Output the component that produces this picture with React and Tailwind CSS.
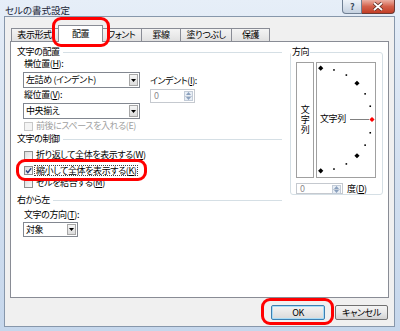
import React from "react";

function Combo({ className, text }) {
  return (
    <div className={`flex items-stretch border border-[#828790] bg-white ${className}`}>
      <div className="flex flex-1 items-center pl-[2px]">{text}</div>
      <div className="my-px mr-px flex w-[9px] items-center justify-center border border-[#a7a7a7] bg-gradient-to-b from-[#f6f6f6] to-[#dcdcdc]">
        <svg width="5" height="3" viewBox="0 0 5 3">
          <path d="M0 0H5L2.5 3Z" fill="#000" />
        </svg>
      </div>
    </div>
  );
}

function Spin({ className }) {
  return (
    <div className={`flex border border-[#c5c9cf] bg-white ${className}`}>
      <div className="flex flex-1 items-center pl-[3px] text-[#8d8d8d]">0</div>
      <div className="my-px mr-px flex w-[9px] flex-col">
        <div className="flex flex-1 items-center justify-center border border-[#c3ccd8] bg-[#e8eef5]">
          <svg width="5" height="3" viewBox="0 0 5 3">
            <path d="M0 3H5L2.5 0Z" fill="#8aa0bd" />
          </svg>
        </div>
        <div className="flex flex-1 items-center justify-center border border-t-0 border-[#c3ccd8] bg-[#e8eef5]">
          <svg width="5" height="3" viewBox="0 0 5 3">
            <path d="M0 0H5L2.5 3Z" fill="#8aa0bd" />
          </svg>
        </div>
      </div>
    </div>
  );
}

function Check({ checked, disabled }) {
  return (
    <div
      className={`flex h-[9px] w-[9px] shrink-0 items-center justify-center border ${
        disabled
          ? "border-[#c8c8c8] bg-[#f4f4f4]"
          : "border-[#8e8f8f] bg-gradient-to-br from-[#dcdcdc] to-[#fbfbfb]"
      }`}
    >
      {checked && (
        <svg width="7" height="7" viewBox="0 0 7 7">
          <path d="M1 3.5L2.8 5.6L6.2 1.2" fill="none" stroke="#2a3f80" strokeWidth="1.4" />
        </svg>
      )}
    </div>
  );
}

function Header({ className, children }) {
  return (
    <div className={`flex h-[10px] items-center pl-[6px] pr-[8px] ${className}`}>
      <span>{children}</span>
      <div className="ml-[3px] h-px flex-1 bg-[#d5dfe5]" />
    </div>
  );
}

function Dial() {
  const pts = [];
  for (let a = -90; a <= 90; a += 15) {
    const r = (a * Math.PI) / 180;
    pts.push({
      x: 3.7 + 51.3 * Math.cos(r),
      y: 56.5 - 51.3 * Math.sin(r),
      big: a % 45 === 0,
      red: a === 0,
    });
  }
  return (
    <svg className="absolute inset-0" width="58" height="114" viewBox="0 0 58 114">
      <line x1="33" y1="56.5" x2="52" y2="56.5" stroke="#808080" strokeWidth="1" />
      {pts.map((p, i) =>
        p.big ? (
          <polygon
            key={i}
            points={`${p.x},${p.y - 2.6} ${p.x + 2.6},${p.y} ${p.x},${p.y + 2.6} ${p.x - 2.6},${p.y}`}
            fill={p.red ? "#ff0000" : "#000"}
          />
        ) : (
          <rect key={i} x={p.x - 0.8} y={p.y - 0.8} width="1.6" height="1.6" fill="#000" />
        )
      )}
    </svg>
  );
}

export default function App() {
  return (
    <div className="relative h-[331px] w-[400px] overflow-hidden bg-gradient-to-b from-[#e6eef8] via-[#d3e0f0] to-[#c6d7ec] font-['Noto_Sans_CJK_JP','Noto_Sans',sans-serif] text-[9px] leading-[10px] tracking-[-0.4px] text-black [font-feature-settings:'palt']">
      {/* title bar */}
      <div className="flex h-[16px] items-start">
        <div className="pl-[5px] pt-[5px] text-[9.5px] tracking-normal text-[#1b2636]">セルの書式設定</div>
        <div className="ml-auto mr-[5px] flex">
          <div className="flex h-[14px] w-[20px] items-center justify-center rounded-bl-[4px] border border-t-0 border-[#6f7f93] bg-gradient-to-b from-[#eef3f9] to-[#c5d1e0] text-[9px] font-bold text-[#3b4a5e]">
            ?
          </div>
          <div className="flex h-[14px] w-[33px] items-center justify-center rounded-br-[4px] border border-l-0 border-t-0 border-[#6b3a33] bg-gradient-to-b from-[#eab0a4] via-[#d3604a] to-[#c23d25]">
            <svg width="12" height="9" viewBox="0 0 12 9">
              <path d="M2 1L10 8M10 1L2 8" stroke="#5a2a22" strokeWidth="3.4" />
              <path d="M2 1L10 8M10 1L2 8" stroke="#fff" strokeWidth="1.8" />
            </svg>
          </div>
        </div>
      </div>

      {/* client area */}
      <div className="ml-[4px] h-[311px] w-[391px] border border-[#8797ab] bg-[#f0f0f0] pt-[8px]">
        {/* tabs */}
        <div className="ml-[6px] flex h-[16px] items-end">
          <div className="flex h-[13px] w-[49px] items-center justify-center border border-b-0 border-[#898c95] bg-gradient-to-b from-[#f4f4f4] to-[#e1e1e1] pr-[2px]">
            表示形式
          </div>
          <div className="relative z-10 -mb-px -ml-[2px] flex h-[17px] w-[45px] items-center justify-center border border-b-0 border-[#898c95] bg-white">
            配置
          </div>
          <div className="-ml-[2px] flex h-[13px] w-[41px] items-center justify-center border border-b-0 border-[#898c95] bg-gradient-to-b from-[#f4f4f4] to-[#e1e1e1]">
            フォント
          </div>
          <div className="-ml-px flex h-[13px] w-[40px] items-center justify-center border border-b-0 border-[#898c95] bg-gradient-to-b from-[#f4f4f4] to-[#e1e1e1]">
            罫線
          </div>
          <div className="-ml-px flex h-[13px] w-[52px] items-center justify-center border border-b-0 border-[#898c95] bg-gradient-to-b from-[#f4f4f4] to-[#e1e1e1]">
            塗りつぶし
          </div>
          <div className="-ml-px flex h-[13px] w-[39px] items-center justify-center border border-b-0 border-[#898c95] bg-gradient-to-b from-[#f4f4f4] to-[#e1e1e1]">
            保護
          </div>
        </div>

        {/* panel */}
        <div className="ml-[5px] flex h-[257px] w-[379px] border border-[#898c95] bg-white">
          <div className="w-[279px] pt-[5px]">
            <Header>文字の配置</Header>
            <div className="flex">
              <div className="pl-[12px]">
                <div className="mt-[2px] h-[10px] pl-px">
                  横位置(<u>H</u>):
                </div>
                <Combo className="mt-[3px] h-[16px] w-[117px]" text="左詰め (インデント)" />
                <div className="mt-[2px] h-[10px] pl-px">
                  縦位置(<u>V</u>):
                </div>
                <Combo className="mt-[3px] h-[16px] w-[117px]" text="中央揃え" />
              </div>
              <div className="ml-[10px] pt-[19px]">
                <div className="h-[10px]">
                  インデント(<u>I</u>):
                </div>
                <Spin className="mt-[3px] h-[14px] w-[45px]" />
              </div>
            </div>
            <div className="mt-[2px] flex h-[10px] items-center pl-[13px] text-[#a0a0a0]">
              <Check disabled />
              <span className="ml-[3px]">前後にスペースを入れる(E)</span>
            </div>

            <Header className="mt-[3px]">文字の制御</Header>
            <div className="mt-[6px] flex h-[10px] items-center pl-[13px]">
              <Check />
              <span className="ml-[3px]">
                折り返して全体を表示する(<u>W</u>)
              </span>
            </div>
            <div className="mt-[5px] flex h-[10px] items-center pl-[13px]">
              <Check checked />
              <span className="ml-px border border-dotted border-[#444] px-px leading-[9px]">
                縮小して全体を表示する(<u>K</u>)
              </span>
            </div>
            <div className="mt-[3px] flex h-[10px] items-center pl-[13px]">
              <Check />
              <span className="ml-[3px]">
                セルを結合する(<u>M</u>)
              </span>
            </div>

            <Header className="mt-[7px]">右から左</Header>
            <div className="mt-[5px] h-[10px] pl-[13px]">
              文字の方向(<u>T</u>):
            </div>
            <Combo className="ml-[12px] mt-[2px] h-[15px] w-[55px]" text="対象" />
          </div>

          {/* orientation group */}
          <fieldset className="mt-[5px] h-[148px] w-[93px] rounded-[3px] border border-[#d5dfe5] px-[5px]">
            <legend className="-ml-[5px] px-px leading-[10px]">方向</legend>
            <div className="mt-[5px] flex gap-[2px]">
              <div className="flex h-[116px] w-[18px] flex-col items-center justify-center border border-[#a0a0a0] leading-[10px]">
                <span>文</span>
                <span>字</span>
                <span>列</span>
              </div>
              <div className="relative h-[116px] w-[60px] border border-[#a0a0a0]">
                <Dial />
                <div className="absolute left-[3px] top-[51px] leading-[10px]">文字列</div>
              </div>
            </div>
            <div className="mt-[5px] flex items-center">
              <Spin className="h-[11px] w-[47px]" />
              <span className="ml-[4px]">
                度(<u>D</u>)
              </span>
            </div>
          </fieldset>
        </div>

        {/* buttons */}
        <div className="ml-[5px] mt-[7px] flex w-[379px] justify-end gap-[10px] pr-px">
          <div className="flex h-[15px] w-[54px] items-center justify-center rounded-[2px] border border-[#3c7fb1] bg-gradient-to-b from-[#f4f4f4] to-[#dadada] shadow-[inset_0_0_0_1px_#a8dcf7]">
            OK
          </div>
          <div className="flex h-[15px] w-[53px] items-center justify-center rounded-[2px] border border-[#707070] bg-gradient-to-b from-[#f4f4f4] via-[#e8e8e8] to-[#d2d2d2]">
            キャンセル
          </div>
        </div>
      </div>

      {/* red highlight marks */}
      <div className="absolute left-[52px] top-[17px] h-[30px] w-[58px] rounded-[9px] border-[3px] border-[#ff0000]" />
      <div className="absolute left-[16px] top-[159px] h-[22px] w-[131px] rounded-[9px] border-[3px] border-[#ff0000]" />
      <div className="absolute left-[261px] top-[298px] h-[27px] w-[73px] rounded-[9px] border-[3px] border-[#ff0000]" />
    </div>
  );
}
